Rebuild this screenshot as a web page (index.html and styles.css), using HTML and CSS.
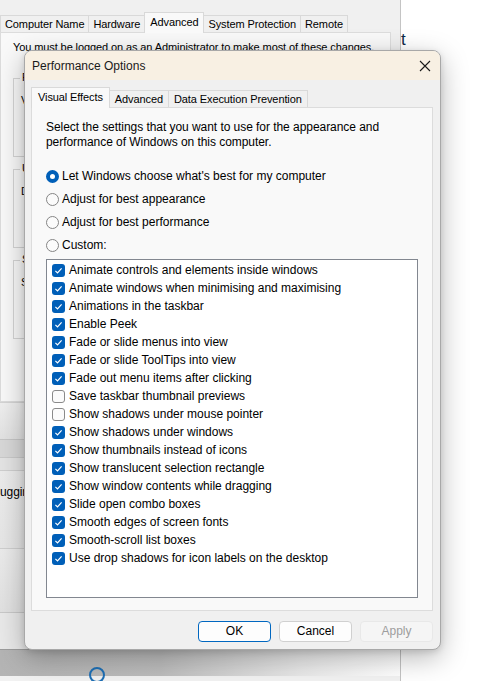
FILE: index.html
```html
<!DOCTYPE html>
<html>
<head>
  <meta charset="UTF-8">
  <title>Performance Options</title>
  <link rel="stylesheet" href="styles.css">
</head>
<body>
<div class="desktop">

  <div class="sysprops">
    <div class="spTop"></div>
    <div class="spTabs">
      <span class="spTab">Computer Name</span>
      <span class="spTab">Hardware</span>
      <span class="spTab active">Advanced</span>
      <span class="spTab">System Protection</span>
      <span class="spTab">Remote</span>
    </div>
    <div class="spPanel">
      <p class="spNote">You must be logged on as an Administrator to make most of these changes.</p>
      <div class="spGroup">
        <span class="spLegend">P</span>
        <p>V</p>
      </div>
      <div class="spGroup">
        <span class="spLegend">U</span>
        <p>D</p>
      </div>
      <div class="spGroup">
        <span class="spLegend">S</span>
        <p>S</p>
      </div>
    </div>
    <div class="spLower">
      <div class="band a"></div>
      <div class="band b"></div>
      <div class="band c"></div>
      <div class="band d"><span>uggin</span></div>
      <div class="band e"></div>
      <div class="band f"></div>
      <div class="band g"><span class="ring"></span></div>
      <div class="band h"></div>
    </div>
  </div>

  <span class="strayT">t</span>

  <div class="dialog">
    <div class="titleBar">
      <span class="title">Performance Options</span>
      <svg class="closeBtn" width="12" height="12" viewBox="0 0 12 12">
        <path d="M1 1 L11 11 M11 1 L1 11" stroke="#1a1a1a" stroke-width="1.1" fill="none"/>
      </svg>
    </div>

    <div class="dlgBody">
      <div class="tabs">
        <span class="tab active">Visual Effects</span>
        <span class="tab">Advanced</span>
        <span class="tab">Data Execution Prevention</span>
      </div>

      <div class="panel">
        <p class="intro">Select the settings that you want to use for the appearance and performance of Windows on this computer.</p>

        <div class="radios">
          <div class="radio on"><span class="dot"></span>Let Windows choose what's best for my computer</div>
          <div class="radio"><span class="dot"></span>Adjust for best appearance</div>
          <div class="radio"><span class="dot"></span>Adjust for best performance</div>
          <div class="radio"><span class="dot"></span>Custom:</div>
        </div>

        <div class="listBox" id="effects"></div>
      </div>

      <div class="buttons">
        <span class="btn default">OK</span>
        <span class="btn">Cancel</span>
        <span class="btn disabled">Apply</span>
      </div>
    </div>
  </div>

</div>

<script>
var effects = [
  ["Animate controls and elements inside windows", 1],
  ["Animate windows when minimising and maximising", 1],
  ["Animations in the taskbar", 1],
  ["Enable Peek", 1],
  ["Fade or slide menus into view", 1],
  ["Fade or slide ToolTips into view", 1],
  ["Fade out menu items after clicking", 1],
  ["Save taskbar thumbnail previews", 0],
  ["Show shadows under mouse pointer", 0],
  ["Show shadows under windows", 1],
  ["Show thumbnails instead of icons", 1],
  ["Show translucent selection rectangle", 1],
  ["Show window contents while dragging", 1],
  ["Slide open combo boxes", 1],
  ["Smooth edges of screen fonts", 1],
  ["Smooth-scroll list boxes", 1],
  ["Use drop shadows for icon labels on the desktop", 1]
];
var tick = '<svg width="13" height="13" viewBox="0 0 13 13"><path d="M3.4 6.9 L5.5 8.9 L9.6 4.4" stroke="#fff" stroke-width="1.2" fill="none"/></svg>';
var box = document.getElementById('effects');
for (var i = 0; i < effects.length; i++) {
  var row = document.createElement('div');
  row.className = 'item';
  row.innerHTML = '<span class="check' + (effects[i][1] ? ' on">' + tick : '">') + '</span>' + effects[i][0];
  box.appendChild(row);
}
</script>
</body>
</html>
```

FILE: styles.css
```css
body {
  margin: 0;
  background-color: #ffffff;
  font-family: "Segoe UI", "Liberation Sans", Arial, sans-serif;
  font-size: 12px;
  color: #000;
  overflow: hidden;
}
p {
  margin: 0;
}

.desktop {
  position: relative;
  width: 493px;
  height: 681px;
  overflow: hidden;
  background-color: #ffffff;
}

/* window behind */
.sysprops {
  position: absolute;
  left: 0px;
  top: 0px;
  width: 400px;
  height: 681px;
  background-color: #f0f0f0;
  border-right: 1px solid #c4c4c4;
  display: flex;
  flex-direction: column;
  font-size: 11px;
  letter-spacing: -0.1px;
}
.spTop {
  height: 13px;
}
.spTabs {
  display: flex;
  align-items: flex-end;
  height: 20px;
  margin-bottom: -1px;
}
.spTab {
  height: 18px;
  line-height: 17px;
  padding: 0 4px;
  border: 1px solid #d9d9d9;
  border-bottom: none;
  margin-right: -1px;
  background-color: #f0f0f0;
  box-sizing: border-box;
}
.spTab.active {
  height: 21px;
  line-height: 18px;
  padding: 0 5px;
  background-color: #f9f9f9;
  position: relative;
  z-index: 1;
}
.spPanel {
  width: 391px;
  height: 370px;
  background-color: #f9f9f9;
  border: 1px solid #dcdcdc;
  box-sizing: border-box;
  padding: 7px 0 0 12px;
}
.spNote {
  white-space: nowrap;
  line-height: 15px;
  margin-bottom: 23px;
}
.spGroup {
  position: relative;
  height: 79px;
  border: 1px solid #d5d5d5;
  margin-bottom: 12px;
  padding: 15px 0 0 7px;
  box-sizing: border-box;
}
.spLegend {
  position: absolute;
  top: -8px;
  left: 6px;
  padding: 0 2px;
  background-color: #f9f9f9;
}
.spLower {
  flex: 1;
  display: flex;
  flex-direction: column;
}
.band {
  box-sizing: border-box;
}
.band.a {
  height: 37px;
  border-top: 1px solid #d4d4d4;
  background: linear-gradient(#efefef, #e2e2e2);
}
.band.b {
  height: 18px;
  border-top: 1px solid #c6c6c6;
  background-color: #d8d8d8;
}
.band.c {
  height: 13px;
  border-top: 1px solid #cacaca;
  background-color: #e4e4e4;
}
.band.d {
  height: 78px;
  border-top: 1px solid #cfcfcf;
  background: linear-gradient(#ececec, #e6e6e6);
  padding-top: 14px;
  font-size: 12px;
}
.band.e {
  height: 64px;
  border-top: 1px solid #cfcfcf;
  background: linear-gradient(#ebebeb, #e1e1e1);
}
.band.f {
  height: 37px;
  border-top: 1px solid #c9c9c9;
  background-color: #e9e9e9;
}
.band.g {
  position: relative;
  height: 27px;
  background: linear-gradient(90deg, #b4b4b4, #bdbdbd 40%, #e9e9e9 75%, #ffffff);
  border-top: 1px solid #9c9c9c;
}
.band.h {
  flex: 1;
  background-color: #f2f2f2;
}
.ring {
  position: absolute;
  left: 89px;
  top: 17px;
  width: 12px;
  height: 12px;
  border: 2px solid #1e6fb5;
  border-radius: 50%;
}
.strayT {
  position: absolute;
  left: 401px;
  top: 31px;
  font-size: 17px;
  line-height: 17px;
  color: #0f2a4a;
}

/* dialog */
.dialog {
  position: absolute;
  left: 24px;
  top: 50px;
  width: 417px;
  height: 600px;
  box-sizing: border-box;
  border: 1px solid #a8a8a8;
  border-radius: 8px;
  background-color: #f0f0f0;
  overflow: hidden;
  box-shadow: 0 8px 28px rgba(0, 0, 0, 0.28), 0 2px 6px rgba(0, 0, 0, 0.12);
  display: flex;
  flex-direction: column;
}
.titleBar {
  height: 29px;
  background-color: #f8f0e3;
  display: flex;
  align-items: center;
  justify-content: space-between;
  padding: 0 9px 0 7px;
  flex-shrink: 0;
}
.title {
  color: #1a1a1a;
}
.dlgBody {
  flex: 1;
  display: flex;
  flex-direction: column;
  padding: 8px 7px 0 6px;
}
.tabs {
  display: flex;
  align-items: flex-end;
  height: 20px;
  margin-bottom: -1px;
  font-size: 11px;
  letter-spacing: -0.1px;
}
.tab {
  height: 18px;
  line-height: 17px;
  padding: 0 5px;
  border: 1px solid #d9d9d9;
  border-bottom: none;
  margin-right: -1px;
  box-sizing: border-box;
  background-color: #f0f0f0;
}
.tab.active {
  height: 21px;
  line-height: 18px;
  padding: 0 6px;
  background-color: #f9f9f9;
  position: relative;
  z-index: 1;
}
.panel {
  height: 504px;
  background-color: #f9f9f9;
  border: 1px solid #dcdcdc;
  box-sizing: border-box;
  padding: 12px 14px 0 14px;
}
.intro {
  line-height: 15px;
  margin-bottom: 18px;
  letter-spacing: -0.05px;
}
.radios {
  display: flex;
  flex-direction: column;
  gap: 7px;
  margin-bottom: 6px;
}
.radio {
  display: flex;
  align-items: center;
  height: 16px;
  gap: 3px;
}
.dot {
  width: 13px;
  height: 13px;
  box-sizing: border-box;
  border-radius: 50%;
  border: 1px solid #858585;
  background-color: #fbfbfb;
}
.radio.on .dot {
  border: 4px solid #005fb8;
  background-color: #ffffff;
}
.listBox {
  height: 339px;
  width: 372px;
  background-color: #ffffff;
  border: 1px solid #828790;
  box-sizing: border-box;
  padding: 1px 0 0 5px;
}
.item {
  height: 18px;
  display: flex;
  align-items: center;
  gap: 4px;
}
.check {
  width: 13px;
  height: 13px;
  box-sizing: border-box;
  border: 1px solid #8a8a8a;
  border-radius: 3px;
  background-color: #fbfbfb;
}
.check.on {
  border: none;
  background-color: #005fb8;
}
.check svg {
  display: block;
}
.buttons {
  display: flex;
  justify-content: flex-end;
  gap: 8px;
  margin-top: 10px;
}
.btn {
  width: 73px;
  height: 21px;
  line-height: 19px;
  box-sizing: border-box;
  text-align: center;
  border: 1px solid #d0d0d0;
  border-radius: 4px;
  background-color: #fdfdfd;
}
.btn.default {
  border-color: #0067c0;
}
.btn.disabled {
  color: #9d9d9d;
  border-color: #e8e8e8;
  background-color: #f5f5f5;
}
```
